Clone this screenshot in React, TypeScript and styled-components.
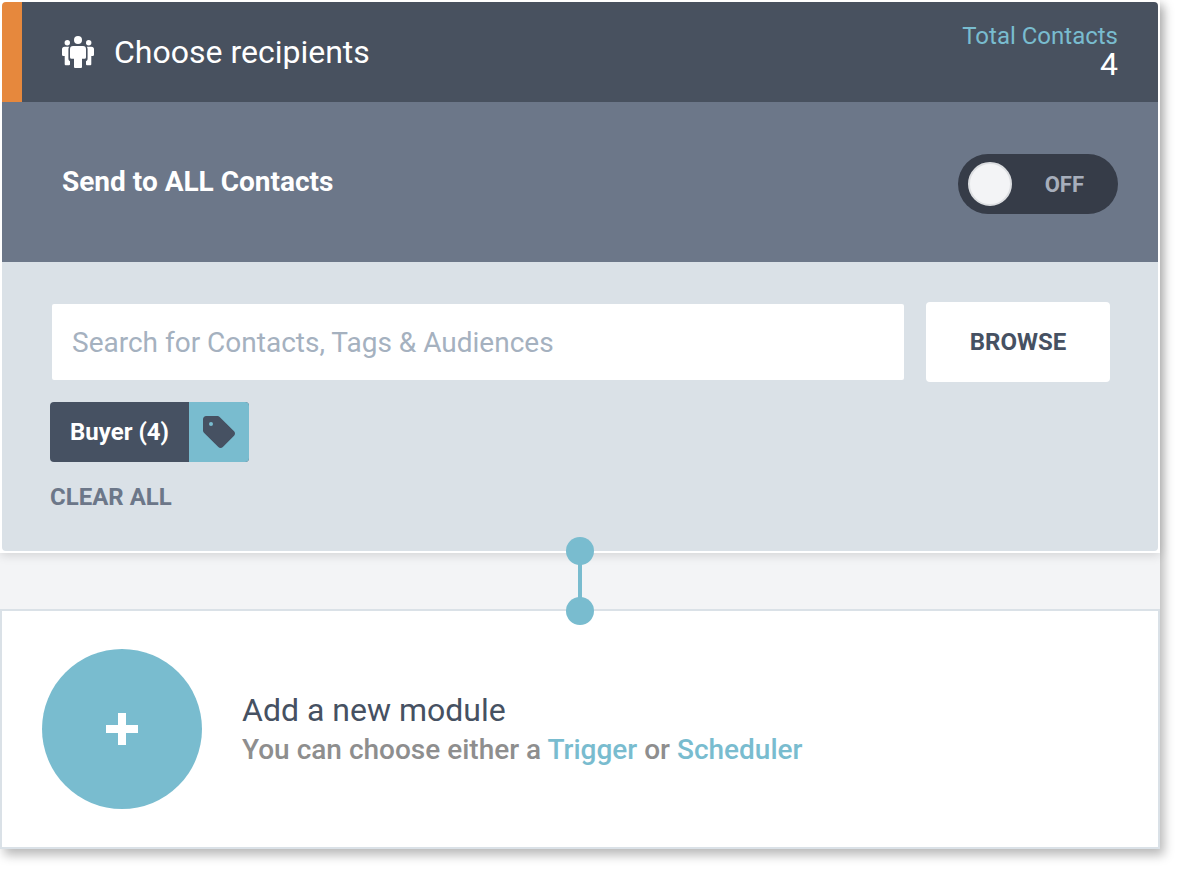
import React, { useState } from "react";
import styled, { createGlobalStyle } from "styled-components";

const color = {
  slate: "#48515f",
  ink: "#465162",
  steel: "#6c7789",
  mist: "#dae1e7",
  fog: "#f3f4f6",
  sky: "#79bccf",
  orange: "#e6883d",
  night: "#363c48",
};

const GlobalStyle = createGlobalStyle`
  * { box-sizing: border-box; }
  body {
    margin: 0;
    background: #fff;
    font-family: Roboto, "Liberation Sans", sans-serif;
    color: ${color.ink};
  }
  button, input { font: inherit; }
`;

const Flow = styled.main`
  margin: 0 35px 34px 0;
  background: ${color.fog};
  box-shadow: 4px 6px 10px rgba(0, 0, 0, 0.28);
`;

const Card = styled.section`
  border: 2px solid #fff;
  background: #fff;
  box-shadow: 0 2px 10px rgba(0, 0, 0, 0.14);
`;

const Header = styled.header`
  display: flex;
  align-items: center;
  min-height: 100px;
  padding: 0 40px;
  border-left: 20px solid ${color.orange};
  border-radius: 4px 4px 0 0;
  background: ${color.slate};
  color: #fff;
`;

const Title = styled.h1`
  flex: 1;
  margin: 0 0 0 20px;
  font-size: 32px;
  line-height: 40px;
  font-weight: 400;
`;

const Total = styled.div`
  display: flex;
  flex-direction: column;
  padding-bottom: 4px;
  text-align: right;
`;

const TotalLabel = styled.span`
  font-size: 24px;
  line-height: 28px;
  color: ${color.sky};
`;

const TotalValue = styled.span`
  font-size: 32px;
  line-height: 28px;
`;

const SendAll = styled.label`
  display: flex;
  align-items: center;
  justify-content: space-between;
  min-height: 160px;
  padding: 4px 40px 0 60px;
  background: ${color.steel};
  color: #fff;
  cursor: pointer;
`;

const SendAllText = styled.span`
  padding-bottom: 4px;
  font-size: 28px;
  line-height: 32px;
  font-weight: 700;
`;

const Switch = styled.span`
  display: flex;
  align-items: center;
  width: 160px;
  height: 60px;
  padding: 0 34px 0 10px;
  border-radius: 30px;
  background: ${color.night};
  justify-content: space-between;
`;

const Knob = styled.input`
  appearance: none;
  width: 44px;
  height: 44px;
  margin: 0;
  border: 2px solid #dcdee1;
  border-radius: 50%;
  background: ${color.fog};
  cursor: pointer;
  &:checked { order: 1; }
`;

const SwitchState = styled.span`
  padding-top: 2px;
  font-size: 22px;
  line-height: 28px;
  font-weight: 700;
  color: #a7aebb;
`;

const Body = styled.div`
  padding: 40px 48px 39px;
  border-radius: 0 0 4px 4px;
  background: ${color.mist};
`;

const SearchRow = styled.form`
  display: flex;
  gap: 20px;
`;

const SearchInput = styled.input`
  flex: 1;
  min-width: 0;
  height: 80px;
  padding: 0 20px;
  border: 2px solid ${color.mist};
  border-radius: 4px;
  background: #fff;
  font-size: 28px;
  color: ${color.ink};
  &::placeholder { color: #a5b1bf; opacity: 1; }
`;

const BrowseButton = styled.button`
  width: 184px;
  height: 80px;
  border: 0;
  border-radius: 4px;
  background: #fff;
  font-size: 24px;
  font-weight: 700;
  color: ${color.ink};
  cursor: pointer;
`;

const Chip = styled.div`
  display: flex;
  width: fit-content;
  height: 60px;
  margin: 20px 0;
  border-radius: 4px;
  overflow: hidden;
  background: ${color.ink};
`;

const ChipLabel = styled.span`
  padding: 0 20px;
  font-size: 24px;
  line-height: 60px;
  font-weight: 700;
  color: #fff;
`;

const ChipIcon = styled.span`
  display: flex;
  align-items: center;
  justify-content: center;
  width: 60px;
  background: ${color.sky};
`;

const ClearButton = styled.button`
  display: block;
  padding: 0;
  border: 0;
  background: none;
  font-size: 24px;
  line-height: 30px;
  font-weight: 700;
  color: ${color.steel};
  cursor: pointer;
`;

const Gap = styled.div`
  position: relative;
  height: 56px;
`;

const Connector = styled.svg`
  position: absolute;
  top: -16px;
  left: 50%;
  transform: translateX(-50%);
  z-index: 1;
`;

const AddModule = styled.section`
  display: flex;
  align-items: center;
  gap: 40px;
  padding: 38px 40px;
  border: 2px solid ${color.mist};
  background: #fff;
`;

const AddButton = styled.button`
  display: flex;
  align-items: center;
  justify-content: center;
  flex: none;
  width: 160px;
  height: 160px;
  padding: 0;
  border: 0;
  border-radius: 50%;
  background: ${color.sky};
  cursor: pointer;
`;

const ModuleCopy = styled.div`
  padding-top: 2px;
`;

const ModuleTitle = styled.h2`
  margin: 0;
  font-size: 32px;
  line-height: 40px;
  font-weight: 400;
`;

const ModuleText = styled.p`
  margin: 0;
  font-size: 28px;
  line-height: 40px;
  font-weight: 500;
  color: #8e8e8e;
`;

const TextLink = styled.a`
  color: ${color.sky};
  text-decoration: none;
`;

const PeopleIcon = () => (
  <svg width="32" height="32" viewBox="0 0 32 32" fill="#fff" aria-hidden="true">
    <circle cx="16" cy="4" r="4" />
    <path d="M11 10h10a3 3 0 0 1 3 3v8.200a1.500 1.500 0 0 1-1.500 1.500H20V31a1 1 0 0 1-1 1h-6a1 1 0 0 1-1-1v-8.300H9.500A1.500 1.500 0 0 1 8 21.200V13a3 3 0 0 1 3-3z" />
    <circle cx="5.300" cy="6.700" r="2.700" />
    <circle cx="26.700" cy="6.700" r="2.700" />
    <path d="M2.600 10.700H7.200A5 5 0 0 0 6.400 13v9.500c0 1.400.600 2.300 1.600 2.700v3.100a1 1 0 0 1-1 1H3.700a1 1 0 0 1-1-1V20H1.300A1.300 1.300 0 0 1 0 18.700v-5.400a2.600 2.600 0 0 1 2.600-2.600z" />
    <path d="M29.400 10.700H24.800a5 5 0 0 1 .800 2.300v9.500c0 1.400-.600 2.300-1.600 2.700v3.100a1 1 0 0 0 1 1h3.300a1 1 0 0 0 1-1V20h1.400a1.300 1.300 0 0 0 1.300-1.300v-5.400a2.600 2.600 0 0 0-2.600-2.600z" />
  </svg>
);

const TagIcon = () => (
  <svg width="32" height="32" viewBox="2 2 20 20" aria-hidden="true">
    <path
      fill={color.ink}
      d="M21.410 11.580l-9-9C12.050 2.220 11.550 2 11 2H4c-1.110 0-2 .890-2 2v7c0 .550.220 1.050.590 1.410l8.990 9c.370.360.870.590 1.420.590s1.050-.230 1.410-.590l7-7c.370-.360.590-.860.590-1.410 0-.560-.230-1.060-.590-1.420z"
    />
    <circle cx="7" cy="7" r="1.250" fill={color.sky} />
  </svg>
);

export default function App() {
  const [sendAll, setSendAll] = useState(false);

  return (
    <>
      <GlobalStyle />
      <Flow>
        <Card>
          <Header>
            <PeopleIcon />
            <Title>Choose recipients</Title>
            <Total>
              <TotalLabel>Total Contacts</TotalLabel>
              <TotalValue>4</TotalValue>
            </Total>
          </Header>
          <SendAll>
            <SendAllText>Send to ALL Contacts</SendAllText>
            <Switch>
              <Knob
                type="checkbox"
                role="switch"
                checked={sendAll}
                onChange={(e) => setSendAll(e.target.checked)}
              />
              <SwitchState>{sendAll ? "ON" : "OFF"}</SwitchState>
            </Switch>
          </SendAll>
          <Body>
            <SearchRow onSubmit={(e) => e.preventDefault()}>
              <SearchInput
                type="text"
                aria-label="Search for Contacts, Tags & Audiences"
                placeholder="Search for Contacts, Tags & Audiences"
              />
              <BrowseButton type="button">BROWSE</BrowseButton>
            </SearchRow>
            <Chip>
              <ChipLabel>Buyer (4)</ChipLabel>
              <ChipIcon>
                <TagIcon />
              </ChipIcon>
            </Chip>
            <ClearButton type="button">CLEAR ALL</ClearButton>
          </Body>
        </Card>
        <Gap>
          <Connector width="28" height="88" viewBox="0 0 28 88" fill={color.sky} aria-hidden="true">
            <circle cx="14" cy="14" r="14" />
            <rect x="12" y="14" width="4" height="60" />
            <circle cx="14" cy="74" r="14" />
          </Connector>
        </Gap>
        <AddModule>
          <AddButton type="button" aria-label="Add a new module">
            <svg width="32" height="32" viewBox="0 0 32 32" fill="#fff" aria-hidden="true">
              <path d="M12 0h8v12h12v8H20v12h-8V20H0v-8h12z" />
            </svg>
          </AddButton>
          <ModuleCopy>
            <ModuleTitle>Add a new module</ModuleTitle>
            <ModuleText>
              You can choose either a <TextLink href="#trigger">Trigger</TextLink> or{" "}
              <TextLink href="#scheduler">Scheduler</TextLink>
            </ModuleText>
          </ModuleCopy>
        </AddModule>
      </Flow>
    </>
  );
}
